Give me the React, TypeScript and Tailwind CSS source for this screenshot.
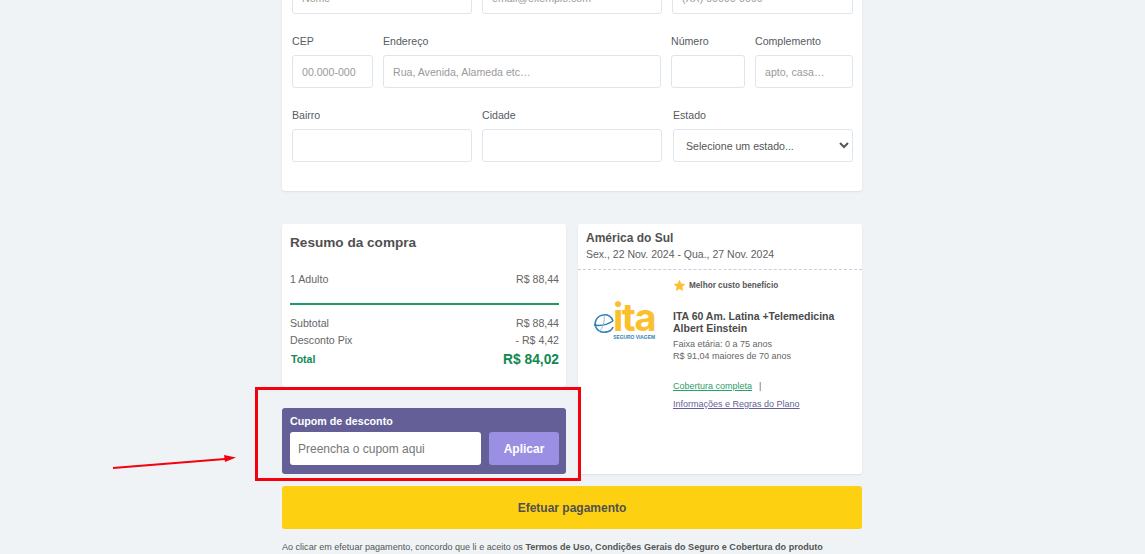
const inputClass =
  "w-full h-[33px] rounded-[3px] border border-[#dfe5ec] bg-white text-[10.6px] text-[#555] placeholder:text-[#9a9a9a] outline-none";

const Field = ({ label, placeholder, className }: { label: string; placeholder?: string; className?: string }) => (
  <div className={className}>
    <label className="block h-[14px] leading-[14px] text-[10.6px] text-[#555b62] mb-[7px]">{label}</label>
    <input className={`${inputClass} px-[9px]`} placeholder={placeholder} />
  </div>
);

const Row = ({ left, right, className }: { left: string; right: string; className?: string }) => (
  <div className={`flex justify-between text-[10.6px] text-[#666] ${className ?? ""}`}>
    <span>{left}</span>
    <span>{right}</span>
  </div>
);

const ItaLogo = () => (
  <div className="flex flex-col items-end w-[60px]">
    <div className="flex items-end h-[32px]">
      <svg width="23" height="26" viewBox="0 0 23 26" fill="none" className="-mb-[3px] -mr-[3px]">
        <path d="M20 17 C18 23 8 24 4 19 C0 14 3 6 10 5 C15 4 19 7 20 11" stroke="#2f7fb5" strokeWidth="1.6" />
        <path d="M1 15 C7 16 14 15 20 11" stroke="#2f7fb5" strokeWidth="1.5" />
        <path d="M6 22 C10 18 12 11 11 5" stroke="#8fbad8" strokeWidth="1" />
      </svg>
      <span className="font-['Inter',sans-serif] font-bold text-[#fbc02d] text-[38px] leading-[32px] tracking-[-1.5px]">ita</span>
    </div>
    <span className="mt-[2px] text-[4.9px] leading-[6px] font-bold text-[#2f7fb5] whitespace-nowrap">SEGURO VIAGEM</span>
  </div>
);

export default function App() {
  return (
    <div className="relative h-[554px] overflow-hidden bg-[#eff3f6] font-['Liberation_Sans',Arial,sans-serif]">
      <div className="w-[580px] ml-[282px] -mt-[40px]">
        {/* Dados do comprador */}
        <section className="bg-white rounded-[3px] shadow-[0_1px_2px_rgba(0,0,0,0.08)] pl-[10px] pr-[9px] h-[231px]">
          <div className="flex gap-[10px]">
            <Field label="Nome" placeholder="Nome" className="w-[180px]" />
            <Field label="E-mail" placeholder="email@exemplo.com" className="w-[180px]" />
            <Field label="Telefone" placeholder="(XX) 00000-0000" className="w-[181px]" />
          </div>
          <div className="flex gap-[10px] mt-[20px]">
            <Field label="CEP" placeholder="00.000-000" className="w-[81px]" />
            <Field label="Endereço" placeholder="Rua, Avenida, Alameda etc…" className="w-[278px]" />
            <Field label="Número" className="w-[74px]" />
            <Field label="Complemento" placeholder="apto, casa…" className="w-[98px]" />
          </div>
          <div className="flex gap-[10px] mt-[20px]">
            <Field label="Bairro" className="w-[180px]" />
            <Field label="Cidade" className="w-[180px]" />
            <div className="w-[180px] ml-[1px]">
              <label className="block h-[14px] leading-[14px] text-[10.6px] text-[#555b62] mb-[7px]">Estado</label>
              <select className={`${inputClass} pl-[8px] pr-[2px]`}>
                <option>Selecione um estado...</option>
              </select>
            </div>
          </div>
        </section>

        <div className="grid grid-cols-[284px_284px] gap-x-[12px] mt-[33px]">
          <div className="flex flex-col gap-[21px]">
            {/* Resumo */}
            <section className="bg-white rounded-[3px] shadow-[0_1px_2px_rgba(0,0,0,0.08)] h-[163px] pl-[8px] pr-[7px] pt-[10px]">
              <h2 className="text-[13.6px] leading-[17px] font-bold text-[#505050]">Resumo da compra</h2>
              <Row left="1 Adulto" right="R$ 88,44" className="mt-[21px] leading-[14px]" />
              <div className="h-[2px] bg-[#1f9a63] mt-[17px]" />
              <Row left="Subtotal" right="R$ 88,44" className="mt-[11px] leading-[14px]" />
              <Row left="Desconto Pix" right="- R$ 4,42" className="mt-[3px] leading-[14px]" />
              <div className="flex justify-between items-center h-[20px] mt-[3px] font-bold text-[#11884f]">
                <span className="text-[10.5px] pl-[1px]">Total</span>
                <span className="text-[13.8px]">R$ 84,02</span>
              </div>
            </section>

            {/* Cupom */}
            <section className="bg-[#655f98] rounded-[3px] h-[66px] pl-[8px] pr-[7px] pt-[6px]">
              <h3 className="text-[10.7px] leading-[14px] font-bold text-white">Cupom de desconto</h3>
              <div className="flex gap-[8px] mt-[4px]">
                <input
                  className="w-[191px] h-[33px] rounded-[3px] bg-white px-[8px] text-[12px] placeholder:text-[#777] outline-none"
                  placeholder="Preencha o cupom aqui"
                />
                <button className="w-[70px] h-[33px] rounded-[3px] bg-[#9b8fe3] text-[12px] font-bold text-white">Aplicar</button>
              </div>
            </section>
          </div>

          {/* Plano */}
          <section className="bg-white rounded-[3px] shadow-[0_1px_2px_rgba(0,0,0,0.08)] h-[250px]">
            <div className="h-[46px] px-[8px] pt-[7px] border-b border-dashed border-[#c5d0da]">
              <h2 className="text-[12px] leading-[15px] font-bold text-[#505050]">América do Sul</h2>
              <p className="text-[10.5px] leading-[15px] mt-[1px] text-[#606060]">Sex., 22 Nov. 2024 - Qua., 27 Nov. 2024</p>
            </div>
            <div className="flex">
              <div className="w-[95px] pl-[17px] pt-[31px]">
                <ItaLogo />
              </div>
              <div className="flex-1">
                <div className="flex items-center h-[15px] mt-[8px] gap-[3px]">
                  <svg width="13" height="13" viewBox="0 0 24 24" fill="#fbc02d">
                    <path d="M12 1.500l3.200 6.900 7.500.9-5.500 5.200 1.400 7.500L12 18.300l-6.600 3.700 1.400-7.500L1.300 9.300l7.500-.9z" />
                  </svg>
                  <span className="text-[8.2px] font-bold text-[#555] pt-[1px]">Melhor custo benefício</span>
                </div>
                <h3 className="text-[10.5px] leading-[12px] font-bold text-[#4a4a4a] mt-[17px] w-[175px]">
                  ITA 60 Am. Latina +Telemedicina Albert Einstein
                </h3>
                <p className="text-[9px] leading-[12px] text-[#666] mt-[4px]">Faixa etária: 0 a 75 anos</p>
                <p className="text-[9px] leading-[12px] text-[#666]">R$ 91,04 maiores de 70 anos</p>
                <div className="mt-[18px] h-[12px] leading-[12px] text-[9px]">
                  <a className="underline text-[#2e9e6b]">Cobertura completa</a>
                  <span className="text-[#666] ml-[7px]">|</span>
                </div>
                <a className="block mt-[6px] leading-[12px] text-[9px] underline text-[#655f98]">Informações e Regras do Plano</a>
              </div>
            </div>
          </section>
        </div>

        <button className="block w-full h-[43px] mt-[12px] rounded-[3px] bg-[#fed012] text-[12px] font-bold text-[#505050]">
          Efetuar pagamento
        </button>
        <p className="mt-[12px] text-[9.05px] leading-[12px] text-[#555] whitespace-nowrap">
          Ao clicar em efetuar pagamento, concordo que li e aceito os{" "}
          <b>Termos de Uso, Condições Gerais do Seguro e Cobertura do produto</b>
        </p>
      </div>

      {/* Marcação por cima da captura */}
      <div className="absolute left-[255px] top-[387px] w-[326px] h-[94px] border-[3px] border-[#f5000f]" />
      <svg className="absolute left-[110px] top-[450px]" width="130" height="22" viewBox="0 0 130 22">
        <path d="M3 18 L115 9" stroke="#f5000f" strokeWidth="1.8" />
        <path d="M114 5 L126 7.500 L115 12 Z" fill="#f5000f" />
      </svg>
    </div>
  );
}
